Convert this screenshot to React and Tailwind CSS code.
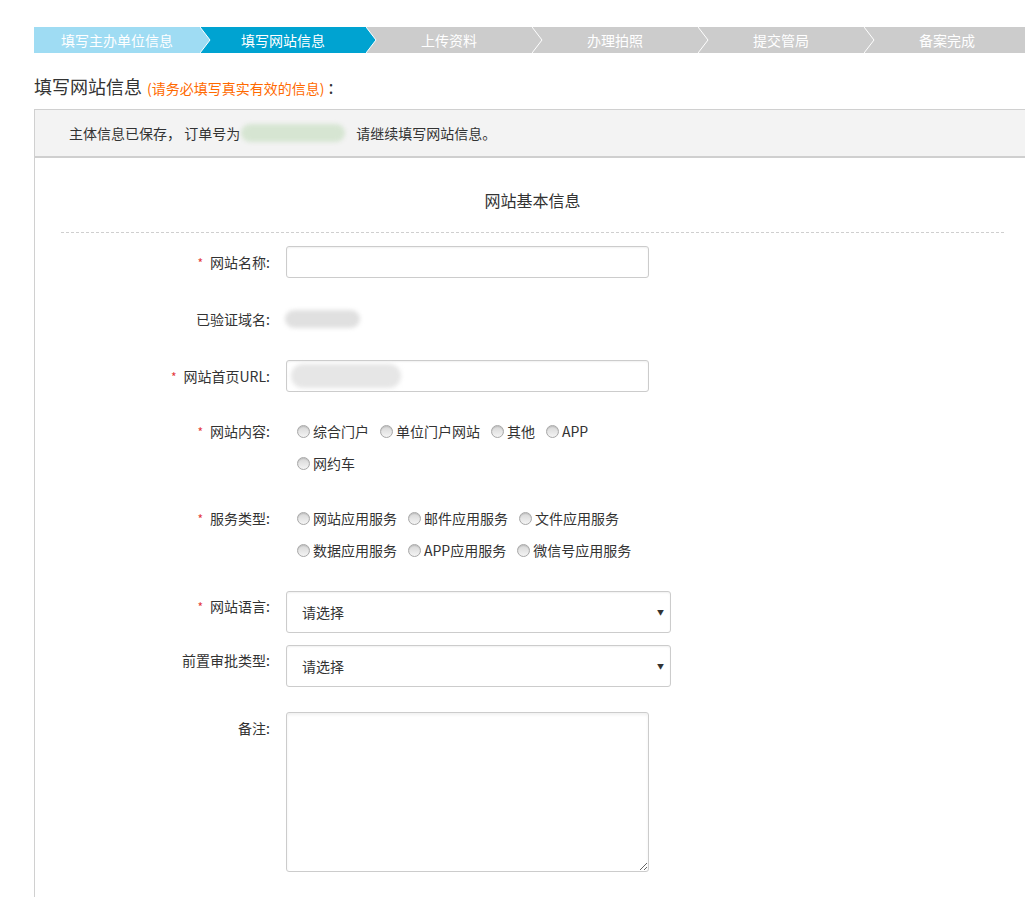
import React from 'react';

const steps = [
  { label: '填写主办单位信息', bg: '#9fdcf3', fill: 'bg-[#9fdcf3]' },
  { label: '填写网站信息', bg: '#00a3d1', fill: 'bg-[#00a3d1]' },
  { label: '上传资料', bg: '#cccccc', fill: 'bg-[#cccccc]' },
  { label: '办理拍照', bg: '#cccccc', fill: 'bg-[#cccccc]' },
  { label: '提交管局', bg: '#cccccc', fill: 'bg-[#cccccc]' },
  { label: '备案完成', bg: '#cccccc', fill: 'bg-[#cccccc]' },
];

function Radio({ children }) {
  return (
    <label className="flex items-center ml-[11px] cursor-pointer">
      <span className="w-[13px] h-[13px] rounded-full border border-[#a8a8a8] bg-linear-to-b from-[#d6d6d6] to-[#f4f4f4] shadow-[inset_0_1px_1px_rgba(0,0,0,0.12)]"></span>
      <span className="ml-[3px]">{children}</span>
    </label>
  );
}

function Label({ required, children }) {
  return (
    <div className="w-[235px] shrink-0 text-right leading-[32px] text-[#333]">
      {required && <span className="text-[#e4393c] mr-[7px] text-[12px]">*</span>}
      {children}:
    </div>
  );
}

function Select() {
  return (
    <div className="relative w-[385px] h-[42px]">
      <select className="appearance-none w-full h-full border border-[#cccccc] rounded-[3px] bg-white pl-[15px] text-[14px] text-[#333] shadow-[inset_0_1px_2px_rgba(0,0,0,0.06)] outline-none">
        <option>请选择</option>
      </select>
      <span className="absolute right-[7px] top-[16px] text-[7px] text-[#333] pointer-events-none">▼</span>
    </div>
  );
}

export default function App() {
  return (
    <div className="w-full overflow-hidden bg-white text-[14px] text-[#333] font-['Noto_Sans_CJK_SC','Microsoft_YaHei',sans-serif]">
      <div className="ml-[34px] w-[996px] pt-[27px]">
        {/* Steps */}
        <div className="flex h-[26px]">
          {steps.map((s, i) => (
            <div key={s.label} className={`relative flex-1 flex items-center justify-center text-white text-[14px] leading-none ${s.fill}`}>
              <span>{s.label}</span>
              {i < steps.length - 1 && (
                <svg className="absolute left-full top-0 z-10" width="11" height="26" viewBox="0 0 11 26">
                  <polygon points="0,0 10,13 0,26" fill={s.bg} />
                  <polyline points="0,0 10,13 0,26" fill="none" stroke="#ffffff" strokeWidth="1" />
                </svg>
              )}
            </div>
          ))}
        </div>

        {/* Heading */}
        <div className="mt-[21px] flex items-baseline leading-[24px]">
          <span className="text-[18px] text-[#333]">填写网站信息</span>
          <span className="ml-[5px] text-[14px] text-[#ff6a00]">(请务必填写真实有效的信息)</span>
          <span className="ml-[4px] text-[18px] text-[#333]">:</span>
        </div>

        {/* Panel */}
        <div className="mt-[9px] border-t border-l border-[#d0d0d0]">
          <div className="h-[48px] bg-[#f3f3f3] border-b-2 border-[#cfcfcf] flex items-center pl-[34px] text-[14px] text-[#333]">
            主体信息已保存， 订单号为
            <span className="inline-block w-[104px] h-[18px] rounded-full bg-[#d6e5d2] blur-[2px] ml-[1px] mr-[11px]"></span>
            请继续填写网站信息。
          </div>

          <div className="pb-[40px]">
            <div className="pt-[32px] pb-[22px] text-center text-[16px] leading-[20px] text-[#333]">网站基本信息</div>
            <div className="mx-[26px] border-t border-dashed border-[#cfcfcf]"></div>

            <div className="mt-[13px] flex flex-col">
              {/* 网站名称 */}
              <div className="flex items-start">
                <Label required>网站名称</Label>
                <input className="ml-[16px] w-[363px] h-[32px] border border-[#cccccc] rounded-[3px] px-[8px] shadow-[inset_0_1px_2px_rgba(0,0,0,0.06)] outline-none" />
              </div>

              {/* 已验证域名 */}
              <div className="mt-[24px] flex items-start">
                <Label>已验证域名</Label>
                <div className="ml-[16px] h-[32px] flex items-center">
                  <span className="block w-[75px] h-[18px] rounded-full bg-[#e0e0e0] blur-[2px] -ml-[1px]"></span>
                </div>
              </div>

              {/* 网站首页URL */}
              <div className="mt-[25px] flex items-start">
                <Label required>网站首页URL</Label>
                <div className="ml-[16px] w-[363px] h-[32px] border border-[#cccccc] rounded-[3px] flex items-center pl-[4px] shadow-[inset_0_1px_2px_rgba(0,0,0,0.06)]">
                  <span className="block w-[110px] h-[24px] rounded-full bg-[#e6e6e6] blur-[2px]"></span>
                </div>
              </div>

              {/* 网站内容 */}
              <div className="mt-[22px] flex items-start">
                <Label required>网站内容</Label>
                <div className="ml-[16px] flex flex-col leading-[32px]">
                  <div className="flex h-[32px] items-center">
                    <Radio>综合门户</Radio>
                    <Radio>单位门户网站</Radio>
                    <Radio>其他</Radio>
                    <Radio>APP</Radio>
                  </div>
                  <div className="flex h-[32px] items-center">
                    <Radio>网约车</Radio>
                  </div>
                </div>
              </div>

              {/* 服务类型 */}
              <div className="mt-[23px] flex items-start">
                <Label required>服务类型</Label>
                <div className="ml-[16px] flex flex-col leading-[32px]">
                  <div className="flex h-[32px] items-center">
                    <Radio>网站应用服务</Radio>
                    <Radio>邮件应用服务</Radio>
                    <Radio>文件应用服务</Radio>
                  </div>
                  <div className="flex h-[32px] items-center">
                    <Radio>数据应用服务</Radio>
                    <Radio>APP应用服务</Radio>
                    <Radio>微信号应用服务</Radio>
                  </div>
                </div>
              </div>

              {/* 网站语言 */}
              <div className="mt-[25px] flex items-start">
                <div className="-mt-[1px]"><Label required>网站语言</Label></div>
                <div className="ml-[16px]"><Select /></div>
              </div>

              {/* 前置审批类型 */}
              <div className="mt-[12px] flex items-start">
                <div className="-mt-[1px]"><Label>前置审批类型</Label></div>
                <div className="ml-[16px]"><Select /></div>
              </div>

              {/* 备注 */}
              <div className="mt-[25px] flex items-start">
                <Label>备注</Label>
                <textarea className="ml-[16px] w-[363px] h-[160px] border border-[#cccccc] rounded-[3px] shadow-[inset_0_2px_3px_rgba(0,0,0,0.06)] outline-none p-[6px]"></textarea>
              </div>
            </div>
          </div>
        </div>
      </div>
    </div>
  );
}
